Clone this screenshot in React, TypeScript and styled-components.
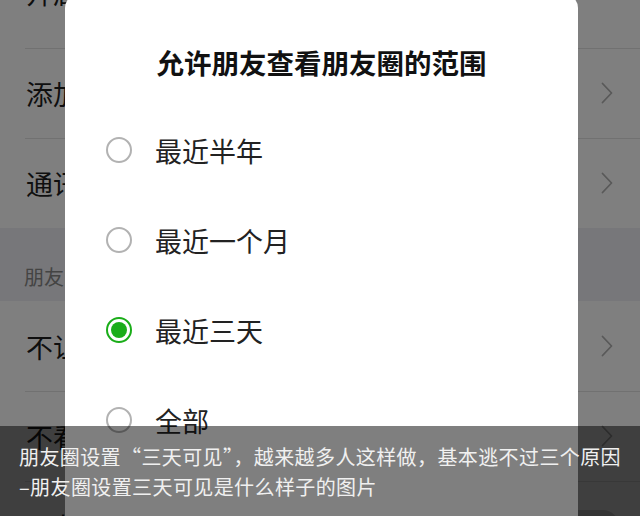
import React from "react";
import styled, { createGlobalStyle } from "styled-components";

const GlobalStyle = createGlobalStyle`
  html, body { margin: 0; padding: 0; }
  body {
    width: 640px;
    height: 516px;
    overflow: hidden;
    font-family: "Noto Sans CJK SC", "Noto Sans", sans-serif;
  }
`;

const Screen = styled.div`
  position: relative;
  width: 640px;
  height: 516px;
  overflow: hidden;
  background: #efeff4;
`;

const List = styled.div`
  display: flex;
  flex-direction: column;
  margin-top: -64px;
`;

const Row = styled.div<{ $h?: number; $first?: boolean }>`
  position: relative;
  display: flex;
  align-items: center;
  justify-content: space-between;
  height: ${(p) => p.$h ?? 90}px;
  padding: 0 27px 0 26px;
  background: #ffffff;
  box-sizing: border-box;
  &::before {
    content: "";
    display: ${(p) => (p.$first ? "none" : "block")};
    position: absolute;
    left: 25px;
    right: 0;
    top: 0;
    height: 1px;
    background: #e2e2e2;
  }
`;

const RowLabel = styled.span`
  font-size: 27px;
  color: #1e1e1e;
  line-height: 1;
`;

const Chevron = styled.svg`
  width: 12px;
  height: 22px;
  display: block;
`;

const Switch = styled.div`
  width: 56px;
  height: 32px;
  border-radius: 16px;
  background: #d2d2d2;
  margin-right: -6px;
`;

const SectionHeader = styled.div`
  display: flex;
  align-items: flex-end;
  height: 73px;
  padding: 0 0 12px 24px;
  box-sizing: border-box;
  font-size: 20px;
  line-height: 24px;
  color: #888888;
`;

const Backdrop = styled.div`
  position: absolute;
  inset: 0;
  background: rgba(0, 0, 0, 0.5);
`;

const Dialog = styled.div`
  position: absolute;
  left: 65px;
  top: -6px;
  width: 513px;
  height: 620px;
  background: #ffffff;
  border-radius: 14px;
  display: flex;
  flex-direction: column;
`;

const Title = styled.div`
  padding: 50px 0 25px;
  text-align: center;
  font-size: 27.5px;
  line-height: 36px;
  font-weight: 700;
  color: #111111;
`;

const Option = styled.div`
  display: flex;
  align-items: center;
  gap: 23px;
  height: 90px;
  padding-left: 41px;
`;

const Radio = styled.span<{ $checked?: boolean }>`
  width: 26px;
  height: 26px;
  box-sizing: border-box;
  border-radius: 50%;
  border: 2px solid ${(p) => (p.$checked ? "#1aad19" : "#b2b2b2")};
  display: flex;
  align-items: center;
  justify-content: center;
  flex-shrink: 0;
  &::after {
    content: "";
    display: ${(p) => (p.$checked ? "block" : "none")};
    width: 16px;
    height: 16px;
    border-radius: 50%;
    background: #1aad19;
  }
`;

const OptionLabel = styled.span`
  font-size: 27px;
  line-height: 1;
  color: #222222;
`;

const Caption = styled.div`
  position: absolute;
  left: 0;
  right: 0;
  bottom: 0;
  height: 90px;
  box-sizing: border-box;
  padding: 16px 0 0 19px;
  background: rgba(0, 0, 0, 0.5);
  color: #f0f0f0;
  font-size: 20px;
  line-height: 30px;
  letter-spacing: 0.4px;
  white-space: nowrap;
`;

const ChevronIcon = () => (
  <Chevron viewBox="0 0 12 22">
    <path d="M1.5 1.5 L10.5 11 L1.5 20.5" fill="none" stroke="#b2b2b2" strokeWidth="1.8" strokeLinecap="round" strokeLinejoin="round" />
  </Chevron>
);

const options = [
  { label: "最近半年", checked: false },
  { label: "最近一个月", checked: false },
  { label: "最近三天", checked: true },
  { label: "全部", checked: false },
];

export default function App() {
  return (
    <>
      <GlobalStyle />
      <Screen>
        <List>
          <Row $h={112} $first>
            <RowLabel>开启朋友验证</RowLabel>
          </Row>
          <Row>
            <RowLabel>添加我的方式</RowLabel>
            <ChevronIcon />
          </Row>
          <Row>
            <RowLabel>通讯录黑名单</RowLabel>
            <ChevronIcon />
          </Row>
          <SectionHeader>朋友圈</SectionHeader>
          <Row $first>
            <RowLabel>不让他（她）看</RowLabel>
            <ChevronIcon />
          </Row>
          <Row>
            <RowLabel>不看他（她）</RowLabel>
            <ChevronIcon />
          </Row>
          <Row>
            <RowLabel>朋友圈更新提醒</RowLabel>
            <Switch />
          </Row>
        </List>
        <Backdrop />
        <Dialog>
          <Title>允许朋友查看朋友圈的范围</Title>
          {options.map((o) => (
            <Option key={o.label}>
              <Radio $checked={o.checked} />
              <OptionLabel>{o.label}</OptionLabel>
            </Option>
          ))}
        </Dialog>
        <Caption>
          <div>朋友圈设置“三天可见”，越来越多人这样做，基本逃不过三个原因</div>
          <div>–朋友圈设置三天可见是什么样子的图片</div>
        </Caption>
      </Screen>
    </>
  );
}
